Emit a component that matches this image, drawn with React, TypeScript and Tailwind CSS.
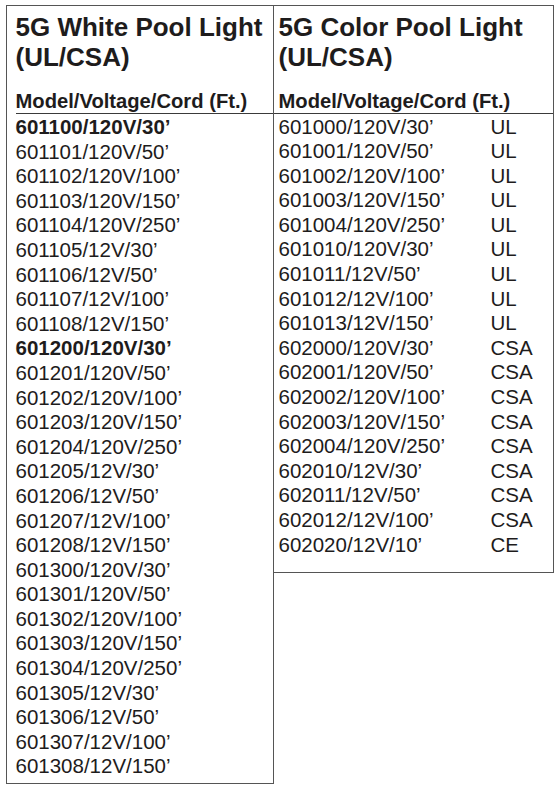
import React from "react";

type Row = { t: string; b?: boolean; c?: string };

const left: Row[] = [
  { t: "601100/120V/30’", b: true },
  { t: "601101/120V/50’" },
  { t: "601102/120V/100’" },
  { t: "601103/120V/150’" },
  { t: "601104/120V/250’" },
  { t: "601105/12V/30’" },
  { t: "601106/12V/50’" },
  { t: "601107/12V/100’" },
  { t: "601108/12V/150’" },
  { t: "601200/120V/30’", b: true },
  { t: "601201/120V/50’" },
  { t: "601202/120V/100’" },
  { t: "601203/120V/150’" },
  { t: "601204/120V/250’" },
  { t: "601205/12V/30’" },
  { t: "601206/12V/50’" },
  { t: "601207/12V/100’" },
  { t: "601208/12V/150’" },
  { t: "601300/120V/30’" },
  { t: "601301/120V/50’" },
  { t: "601302/120V/100’" },
  { t: "601303/120V/150’" },
  { t: "601304/120V/250’" },
  { t: "601305/12V/30’" },
  { t: "601306/12V/50’" },
  { t: "601307/12V/100’" },
  { t: "601308/12V/150’" },
];

const right: Row[] = [
  { t: "601000/120V/30’", c: "UL" },
  { t: "601001/120V/50’", c: "UL" },
  { t: "601002/120V/100’", c: "UL" },
  { t: "601003/120V/150’", c: "UL" },
  { t: "601004/120V/250’", c: "UL" },
  { t: "601010/120V/30’", c: "UL" },
  { t: "601011/12V/50’", c: "UL" },
  { t: "601012/12V/100’", c: "UL" },
  { t: "601013/12V/150’", c: "UL" },
  { t: "602000/120V/30’", c: "CSA" },
  { t: "602001/120V/50’", c: "CSA" },
  { t: "602002/120V/100’", c: "CSA" },
  { t: "602003/120V/150’", c: "CSA" },
  { t: "602004/120V/250’", c: "CSA" },
  { t: "602010/12V/30’", c: "CSA" },
  { t: "602011/12V/50’", c: "CSA" },
  { t: "602012/12V/100’", c: "CSA" },
  { t: "602020/12V/10’", c: "CE" },
];

function Title({ name }: { name: string }) {
  return (
    <>
      <div className="pt-[5.5px] text-[26px] leading-[30px] font-bold whitespace-nowrap">
        {name}
        <br />
        (UL/CSA)
      </div>
      <div className="mt-[17px] border-b-[1.5px] border-[#3a3a3a] text-[20.2px] leading-[24.5px] font-bold whitespace-nowrap">
        Model/Voltage/Cord (Ft.)
      </div>
    </>
  );
}

export default function App() {
  return (
    <div
      className="min-h-[789px] w-[559px] bg-white pl-[6px] pt-[5px] text-[#1e1c1c]"
      style={{ fontFamily: '"Liberation Sans", Arial, sans-serif' }}
    >
      <div className="flex items-start">
        <div className="w-[268px] border-[1.5px] border-[#555] pl-[8.5px] pb-[4px]">
          <Title name="5G White Pool Light" />
          <div className="pt-[1px] text-[20.5px] leading-[24.6px]">
            {left.map((r) => (
              <div key={r.t} className={r.b ? "font-bold whitespace-nowrap" : "whitespace-nowrap"}>
                {r.t}
              </div>
            ))}
          </div>
        </div>
        <div className="w-[280px] border-[1.5px] border-l-0 border-[#555] pb-[15px]">
          <div className="pl-[4.5px]">
            <Title name="5G Color Pool Light" />
          </div>
          <div className="-mt-[1.5px] border-t-[1.5px] border-[#3a3a3a] pt-[1px] pl-[4.5px] text-[20.5px] leading-[24.6px]">
            {right.map((r) => (
              <div key={r.t} className="flex whitespace-nowrap">
                <span className="w-[212px]">{r.t}</span>
                <span>{r.c}</span>
              </div>
            ))}
          </div>
        </div>
      </div>
    </div>
  );
}
